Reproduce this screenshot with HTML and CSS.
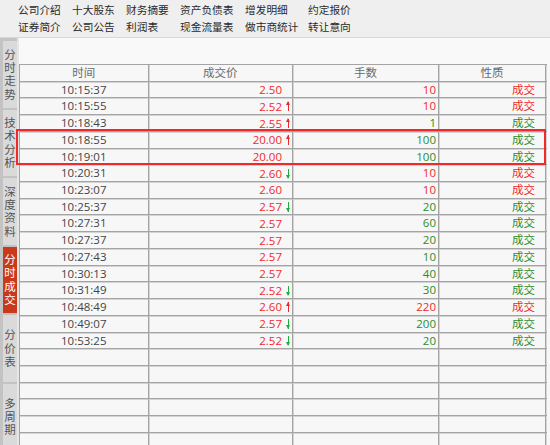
FILE: index.html
```html
<!DOCTYPE html>
<html lang="zh-CN">
<head>
<meta charset="utf-8">
<title>分时成交</title>
<link rel="stylesheet" href="styles.css">
</head>
<body>
<div class="page">
  <div class="toolbar">
    <span>公司介绍</span><span>十大股东</span><span>财务摘要</span><span>资产负债表</span><span>增发明细</span><span>约定报价</span>
    <span>证券简介</span><span>公司公告</span><span>利润表</span><span>现金流量表</span><span>做市商统计</span><span>转让意向</span>
  </div>
  <div class="main">
    <div class="sidebar">
      <div class="tab">分时走势</div>
      <div class="tab">技术分析</div>
      <div class="tab">深度资料</div>
      <div class="tab active">分时成交</div>
      <div class="tab">分价表</div>
      <div class="tab">多周期</div>
    </div>
    <div class="content">
      <div class="blank"></div>
      <div class="table">
        <div class="row head"><div class="c">时间</div><div class="c">成交价</div><div class="c">手数</div><div class="c">性质</div></div>
        <div class="row"><div class="c t">10:15:37</div><div class="c p red"><span>2.50</span><i></i></div><div class="c q red">10</div><div class="c n red">成交</div></div>
        <div class="row"><div class="c t">10:15:55</div><div class="c p red"><span>2.52</span><i class="up"></i></div><div class="c q red">10</div><div class="c n red">成交</div></div>
        <div class="row"><div class="c t">10:18:43</div><div class="c p red"><span>2.55</span><i class="up"></i></div><div class="c q green">1</div><div class="c n green">成交</div></div>
        <div class="row"><div class="c t">10:18:55</div><div class="c p red"><span>20.00</span><i class="up"></i></div><div class="c q green">100</div><div class="c n green">成交</div></div>
        <div class="row"><div class="c t">10:19:01</div><div class="c p red"><span>20.00</span><i></i></div><div class="c q green">100</div><div class="c n green">成交</div></div>
        <div class="row"><div class="c t">10:20:31</div><div class="c p red"><span>2.60</span><i class="down"></i></div><div class="c q red">10</div><div class="c n red">成交</div></div>
        <div class="row"><div class="c t">10:23:07</div><div class="c p red"><span>2.60</span><i></i></div><div class="c q red">10</div><div class="c n red">成交</div></div>
        <div class="row"><div class="c t">10:25:37</div><div class="c p red"><span>2.57</span><i class="down"></i></div><div class="c q green">20</div><div class="c n green">成交</div></div>
        <div class="row"><div class="c t">10:27:31</div><div class="c p red"><span>2.57</span><i></i></div><div class="c q green">60</div><div class="c n green">成交</div></div>
        <div class="row"><div class="c t">10:27:37</div><div class="c p red"><span>2.57</span><i></i></div><div class="c q green">20</div><div class="c n green">成交</div></div>
        <div class="row"><div class="c t">10:27:43</div><div class="c p red"><span>2.57</span><i></i></div><div class="c q green">10</div><div class="c n green">成交</div></div>
        <div class="row"><div class="c t">10:30:13</div><div class="c p red"><span>2.57</span><i></i></div><div class="c q green">40</div><div class="c n green">成交</div></div>
        <div class="row"><div class="c t">10:31:49</div><div class="c p red"><span>2.52</span><i class="down"></i></div><div class="c q green">30</div><div class="c n green">成交</div></div>
        <div class="row"><div class="c t">10:48:49</div><div class="c p red"><span>2.60</span><i class="up"></i></div><div class="c q red">220</div><div class="c n red">成交</div></div>
        <div class="row"><div class="c t">10:49:07</div><div class="c p red"><span>2.57</span><i class="down"></i></div><div class="c q green">200</div><div class="c n green">成交</div></div>
        <div class="row"><div class="c t">10:53:25</div><div class="c p red"><span>2.52</span><i class="down"></i></div><div class="c q green">20</div><div class="c n green">成交</div></div>
        <div class="row"><div class="c"></div><div class="c"></div><div class="c"></div><div class="c"></div></div>
        <div class="row"><div class="c"></div><div class="c"></div><div class="c"></div><div class="c"></div></div>
        <div class="row"><div class="c"></div><div class="c"></div><div class="c"></div><div class="c"></div></div>
        <div class="row"><div class="c"></div><div class="c"></div><div class="c"></div><div class="c"></div></div>
        <div class="row"><div class="c"></div><div class="c"></div><div class="c"></div><div class="c"></div></div>
        <div class="row"><div class="c"></div><div class="c"></div><div class="c"></div><div class="c"></div></div>
      </div>
    </div>
  </div>
  <div class="highlight"></div>
</div>
</body>
</html>
```
FILE: styles.css
```css
html, body {
  margin: 0;
  padding: 0;
  width: 550px;
  height: 445px;
  overflow: hidden;
  background: #efefef;
  font-family: "Open Sans", "Noto Sans CJK SC", sans-serif;
}
.page {
  position: relative;
  width: 550px;
  height: 445px;
  overflow: hidden;
}
.toolbar {
  box-sizing: border-box;
  height: 38px;
  padding: 2px 0 0 18px;
  display: grid;
  grid-template-columns: 54px 54px 54px 65px 63px auto;
  grid-auto-rows: 16.7px;
  align-items: center;
  font-family: "Noto Sans CJK SC", sans-serif;
  font-size: 10.7px;
  line-height: 14px;
  color: #2a2a2a;
  background: #efefef;
  border-bottom: 1px solid #d8d8d8;
}
.main {
  display: flex;
  height: 407px;
}
.sidebar {
  width: 17px;
  box-sizing: border-box;
  padding: 3px 0 0 3px;
  background: #c3c3c3;
  display: flex;
  flex-direction: column;
  gap: 2px;
  flex: none;
}
.tab {
  height: 66.5px;
  flex: none;
  width: 14px;
  background: #dadada;
  color: #555;
  font-family: "Noto Sans CJK SC", sans-serif;
  font-size: 11.5px;
  line-height: 13.3px;
  display: flex;
  align-items: center;
  justify-content: center;
  text-align: center;
  word-break: break-all;
  box-sizing: border-box;
  padding: 0 1px;
}
.tab.active {
  background: #c9391b;
  color: #fff;
}
.content {
  flex: 1;
  background: #f7f7f7;
  border-left: 2px solid #e6e6e6;
  display: flex;
  flex-direction: column;
}
.blank {
  height: 26px;
  flex: none;
  background: #f9f9f9;
}
.table {
  border-top: 1px solid #a4a4a4;
  border-left: 1px solid #a4a4a4;
  width: 527px;
  background: #f7f7f7;
}
.row {
  display: grid;
  grid-template-columns: 128.5px 144.5px 146px 107px;
  height: 16.73px;
  box-sizing: border-box;
  border-bottom: 1px solid #a4a4a4;
  box-shadow: 0 1px 0 #d4d4d4;
  font-size: 11.5px;
  line-height: 15px;
}
.c {
  border-right: 1px solid #a4a4a4;
  box-shadow: 1px 0 0 #d4d4d4;
  box-sizing: border-box;
  white-space: nowrap;
  overflow: hidden;
}
.head .c {
  text-align: center;
  color: #6a6a6a;
  font-family: "Noto Sans CJK SC", sans-serif;
}
.t {
  text-align: center;
  color: #444;
}
.p {
  display: flex;
  justify-content: flex-end;
  align-items: center;
}
.p i {
  display: block;
  width: 10px;
  height: 15px;
  flex: none;
  position: relative;
}
.p i.up::before, .p i.down::before {
  content: "";
  position: absolute;
  left: 6px;
  top: 3px;
  width: 1.3px;
  height: 9.5px;
}
.p i.up::after, .p i.down::after {
  content: "";
  position: absolute;
  left: 4px;
  width: 0;
  height: 0;
  border-left: 2.7px solid transparent;
  border-right: 2.7px solid transparent;
}
.p i.up::before { background: #e82a2a; }
.p i.up::after { top: 2.5px; border-bottom: 4px solid #e82a2a; }
.p i.down::before { background: #1fae3c; }
.p i.down::after { top: 9px; border-top: 4px solid #1fae3c; }
.q {
  text-align: right;
  padding-right: 2px;
}
.n {
  text-align: right;
  padding-right: 10px;
  font-family: "Noto Sans CJK SC", sans-serif;
}
.red { color: #ee2a2a; }
.green { color: #2c8c2c; }
.highlight {
  position: absolute;
  left: 16px;
  top: 129px;
  width: 526px;
  height: 32px;
  border: 2px solid #f0292c;
}
```
